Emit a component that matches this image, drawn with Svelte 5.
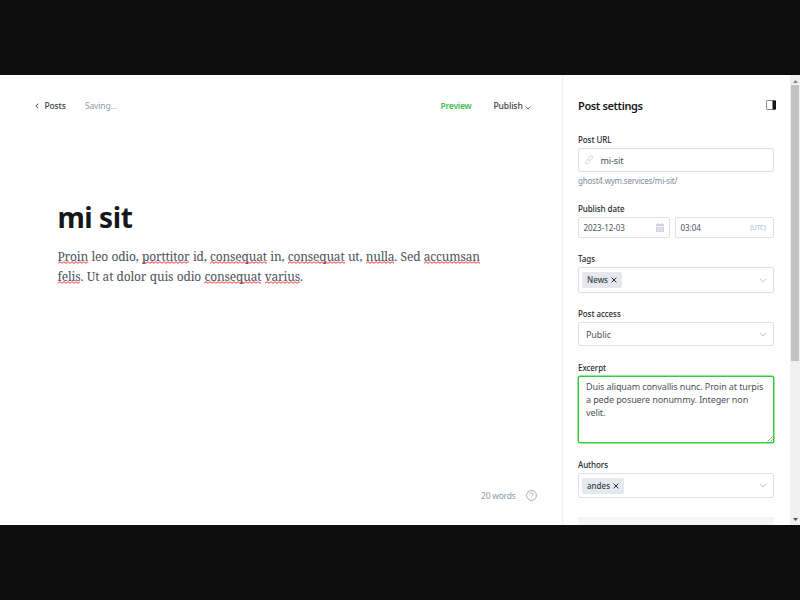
<script>
  const lines = [
    [['Proin', 1], [' leo odio, '], ['porttitor', 1], [' id, '], ['consequat', 1], [' in, '], ['consequat', 1], [' ut, '], ['nulla', 1], ['. Sed '], ['accumsan', 1]],
    [['felis', 1], ['. Ut at dolor quis odio '], ['consequat', 1], [' '], ['varius', 1], ['.']]
  ];
</script>

{#snippet chevron()}
  <svg class="chev" width="8" height="5" viewBox="0 0 8 5"><path d="M.8.7 4 4 7.2.7" /></svg>
{/snippet}

{#snippet token(label)}
  <span class="token">{label}
    <svg width="6" height="6" viewBox="0 0 6 6"><path d="M.6.6 5.4 5.4M5.4.6.6 5.4" /></svg>
  </span>
{/snippet}

<div class="screen">
  <div class="window">
    <main>
      <header>
        <svg class="back" width="4" height="6" viewBox="0 0 4 6"><path d="M3.3.6.8 3l2.5 2.4" /></svg>
        <span class="posts">Posts</span>
        <span class="saving">Saving...</span>
        <span class="preview">Preview</span>
        <span class="publish">Publish</span>
        <svg class="down" width="6" height="4" viewBox="0 0 6 4"><path d="M.6.6 3 3 5.4.6" /></svg>
      </header>
      <article>
        <h1>mi sit</h1>
        <div class="body">
          {#each lines as line}
            <p>{#each line as [text, bad]}<span class:bad>{text}</span>{/each}</p>
          {/each}
        </div>
      </article>
      <footer>
        <span>20 words</span>
        <svg width="11" height="11" viewBox="0 0 11 11"><circle cx="5.5" cy="5.5" r="4.9" /><path d="M4 4.4c0-2 3-2 3-.1 0 1.1-1.5 1-1.5 2.2M5.5 7.5v.8" /></svg>
      </footer>
    </main>

    <aside>
      <div class="head">
        <h2>Post settings</h2>
        <svg width="10" height="10" viewBox="0 0 10 10"><rect x=".5" y=".5" width="9" height="9" rx=".6" fill="#fff" stroke="#8a8a8a" /><path d="M6.5.5h2.9q.6 0 .6.6v7.8q0 .6-.6.6H6.5z" fill="#15171a" /></svg>
      </div>

      <div class="field url">
        <span class="label">Post URL</span>
        <div class="box">
          <svg class="link" width="10" height="10" viewBox="0 0 10 10"><path d="M4.2 3.1 6 1.3q1.2-1 2.2 0t0 2.2L6.4 5.4q-1.1 1-2.2 0M5.8 6.6 4 8.4q-1.2 1-2.2 0t0-2.2L3.6 4.4q1.1-1 2.2 0" /></svg>
          <span class="value v-url">mi-sit</span>
        </div>
        <span class="hint">ghost4.wym.services/mi-sit/</span>
      </div>

      <div class="field date">
        <span class="label">Publish date</span>
        <div class="pair">
          <div class="box day"><span>2023-12-03</span>
            <svg width="8" height="9" viewBox="0 0 8 9"><path d="M0 1h8v2H0zM0 3.7h8V9H0zM1.5 0h1v1h-1zM5.5 0h1v1h-1z" fill="#ced4d9" /><path d="M1 5.3h6M1 7.2h6M2.7 4v5M5.3 4v5" stroke="#eef0f2" stroke-width=".5" /></svg>
          </div>
          <div class="box time"><span>03:04</span><span class="utc">(UTC)</span></div>
        </div>
      </div>

      <div class="field tags">
        <span class="label">Tags</span>
        <div class="box">{@render token('News')}{@render chevron()}</div>
      </div>

      <div class="field access">
        <span class="label">Post access</span>
        <div class="box"><span class="value v-public">Public</span>{@render chevron()}</div>
      </div>

      <div class="field excerpt">
        <span class="label">Excerpt</span>
        <div class="box area">
          <span>Duis aliquam convallis nunc. Proin at turpis</span>
          <span>a pede posuere nonummy. Integer non</span>
          <span>velit.</span>
          <svg class="grip" width="6" height="6" viewBox="0 0 6 6"><path d="M.5 5.5l5-5M3.5 5.5l2-2" /></svg>
        </div>
      </div>

      <div class="field authors">
        <span class="label">Authors</span>
        <div class="box">{@render token('andes')}{@render chevron()}</div>
      </div>
      <div class="more"></div>
    </aside>

    <div class="scroll">
      <svg width="5" height="3" viewBox="0 0 5 3"><path d="M0 3 2.5 0 5 3z" fill="#8b8b8b" /></svg>
      <div class="thumb"></div>
      <svg class="last" width="5" height="3" viewBox="0 0 5 3"><path d="M0 0h5L2.5 3z" fill="#505050" /></svg>
    </div>
  </div>
</div>

<style>
  :global(body) { margin: 0; background: #0e0e0e; }
  .screen { box-sizing: border-box; width: 800px; height: 600px; padding: 75px 0; background: #0e0e0e; font-family: 'Noto Sans', 'Open Sans', sans-serif; color: #394047; overflow: hidden; }
  .window { display: flex; height: 450px; background: #fff; overflow: hidden; }
  svg { display: block; flex: none; fill: none; }
  h1, h2, p { margin: 0; }
  span { white-space: pre; }
  main { box-sizing: border-box; width: 562px; display: flex; flex-direction: column; }
  header { display: flex; align-items: center; height: 20px; margin-top: 21px; padding-left: 35px; font-size: 8.5px; line-height: 20px; letter-spacing: -.16px; }
  .back { stroke: #394047; stroke-width: .9; }
  .posts { width: 40.5px; margin-left: 5.5px; font-weight: 500; }
  .saving { width: 355.5px; color: #8b9ba8; }
  .preview { width: 53px; color: #42bd50; font-weight: 600; letter-spacing: -.22px; }
  .publish { font-weight: 500; width: 31px; letter-spacing: -.1px; }
  .down { stroke: #394047; stroke-width: .8; margin-top: 3px; }
  article { padding: 80px 0 0 57.5px; flex: 1; }
  h1 { font-size: 28px; line-height: 42px; font-weight: 700; color: #15171a; letter-spacing: -.45px; }
  .body { margin-top: 9px; font-family: 'Noto Serif', 'DejaVu Serif Condensed', 'DejaVu Serif', serif; font-size: 12px; letter-spacing: -.172px; word-spacing: .45px; color: #4b535b; }
  .body p { height: 20px; line-height: 20px; white-space: pre; }
  .bad { background: url("data:image/svg+xml,%3Csvg xmlns='http://www.w3.org/2000/svg' width='4' height='3'%3E%3Cpath d='M0 2.3 2 .7 4 2.3' fill='none' stroke='%23f33' stroke-width='1'/%3E%3C/svg%3E") repeat-x left bottom 1px; }
  footer { display: flex; align-items: center; justify-content: flex-end; gap: 10px; padding-right: 25.5px; height: 20px; margin-bottom: 20px; font-size: 8.5px; letter-spacing: -.25px; color: #8b9ba8; }
  footer svg { stroke: #8b9ba8; stroke-width: .8; }
  aside { box-sizing: border-box; width: 228px; border-left: 1px solid #eff1f2; padding: 0 16px 0 15px; overflow: hidden; }
  .head { display: flex; align-items: center; justify-content: space-between; height: 20px; margin: 20px -2px 15px 0; }
  h2 { font-size: 11px; line-height: 21px; font-weight: 600; color: #15171a; letter-spacing: -.38px; }
  .field { display: flex; flex-direction: column; }
  .label { flex: none; font-size: 8px; line-height: 12px; height: 16px; padding-top: 2px; box-sizing: border-box; font-weight: 500; color: #262a2f; letter-spacing: -.08px; }
  .box { box-sizing: border-box; display: flex; align-items: center; border: 1px solid #dfe2e4; border-radius: 2px; background: #fff; }
  .url { height: 70px; padding-top: 1px; }
  .url .label { height: 17px; padding-top: 3px; }
  .url .box { height: 24px; padding-left: 5px; }
  .link { stroke: #c3c9cd; stroke-width: .8; }
  .value { font-size: 9px; line-height: 12px; color: #4b535b; }
  .v-url { margin-left: 6.5px; padding-top: 1px; letter-spacing: -.1px; }
  .hint { margin-top: 3px; font-size: 8px; line-height: 12px; letter-spacing: -.21px; color: #7c8b9a; }
  .date { height: 50px; }
  .pair { display: flex; gap: 5px; }
  .pair .box { height: 21px; padding: 0 5px 0 4.5px; justify-content: space-between; font-size: 8px; letter-spacing: -.04px; color: #4b535b; }
  .day { width: 92px; }
  .time { width: 99px; }
  .time .utc { font-size: 6.4px; color: #aeb7c1; padding-right: 2px; }
  .tags { height: 55px; }
  .tags .box { height: 26px; }
  .access { height: 54px; }
  .access .box { height: 24px; }
  .v-public { margin-left: 7px; padding-top: 1px; letter-spacing: -.08px; }
  .chev { stroke: #b5bfc8; stroke-width: .9; margin: 0 6px 0 auto; }
  .token { display: flex; align-items: center; gap: 3px; height: 16px; margin-left: 3px; padding: 0 5px; border-radius: 2px; background: #e5e9ed; font-size: 8px; line-height: 14px; font-weight: 500; white-space: normal; color: #394047; }
  .token svg { stroke: #26292d; stroke-width: 1; }
  .excerpt { height: 98px; }
  .area { position: relative; flex-direction: column; align-items: flex-start; height: 67px; padding: 3px 7px; border-color: #30cf43; box-shadow: 0 0 0 .5px #30cf43; font-size: 9px; line-height: 13px; letter-spacing: -.11px; color: #4b535b; }
  .grip { position: absolute; right: 0; bottom: 0; stroke: #666; stroke-width: .6; }
  .authors .label { height: 15px; padding-top: 1px; }
  .authors .box { height: 25px; }
  .more { height: 20px; margin-top: 19px; background: #f4f6f6; }
  .scroll { display: flex; flex-direction: column; align-items: center; width: 10px; background: #f0f0f0; padding: 5px 0 4px; box-sizing: border-box; }
  .thumb { width: 8px; height: 276px; margin-top: 2px; background: #c1c1c1; }
  .last { margin-top: auto; }
</style>
